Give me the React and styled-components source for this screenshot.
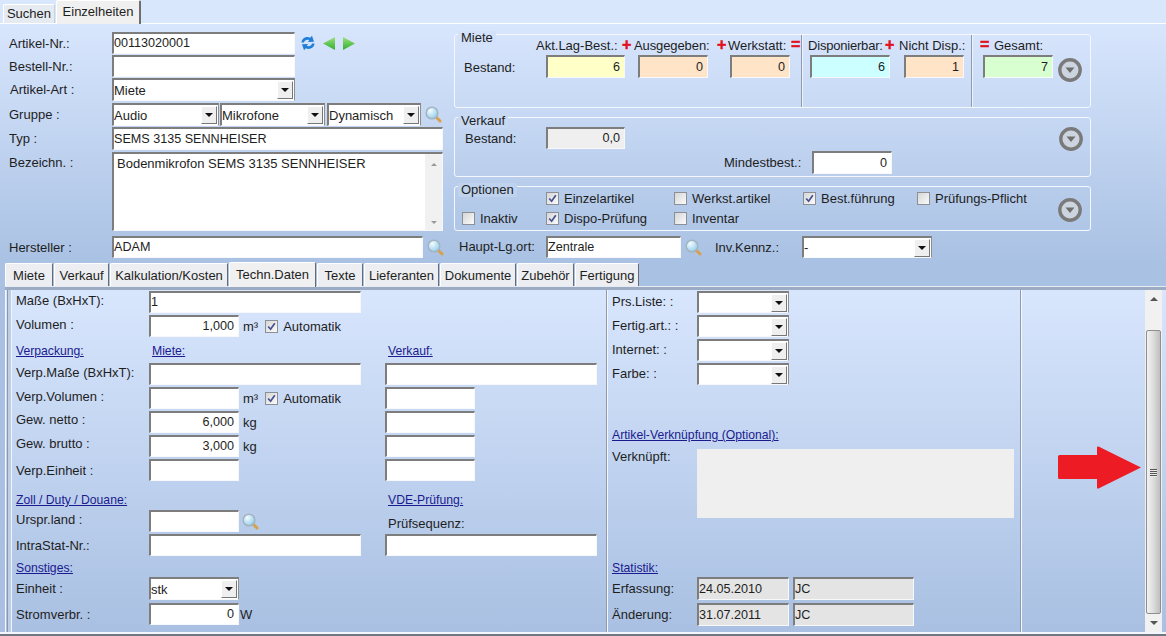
import React from "react";
import styled, { createGlobalStyle } from "styled-components";

const Global = createGlobalStyle`
  html, body { margin: 0; padding: 0; background: #d8e6fc; }
  body { font-family: "Liberation Sans", Arial, sans-serif; font-size: 13px; color: #1e1e1e; }
`;

const Page = styled.div`
  position: relative;
  width: 1166px;
  height: 636px;
  overflow: hidden;
  display: flex;
  flex-direction: column;
`;

/* top tabs */
const TopBar = styled.div`
  height: 23px;
  flex: none;
  display: flex;
  align-items: flex-end;
  padding-left: 3px;
  background: #d9e7fc;
  border-bottom: 1px solid #fdfeff;
  box-sizing: content-box;
`;
const TopTab = styled.div`
  box-sizing: border-box;
  display: flex;
  justify-content: center;
  align-items: center;
  width: ${(p) => p.$w}px;
  height: ${(p) => (p.$active ? 24 : 19)}px;
  margin-bottom: ${(p) => (p.$active ? -1 : 0)}px;
  margin-left: ${(p) => (p.$active ? 1 : 0)}px;
  padding-bottom: ${(p) => (p.$active ? 3 : 1)}px;
  background: ${(p) => (p.$active ? "#f0f0f0" : "#e6ebf2")};
  border-top: 1px solid #fff;
  border-left: 1px solid #fff;
  border-right: ${(p) => (p.$active ? "2px solid #6e6e6e" : "1px solid #c8d0dc")};
  border-radius: 2px 2px 0 0;
`;

/* header */
const Header = styled.div`
  height: 239px;
  flex: none;
  display: flex;
  background: linear-gradient(#d8e6fd, #a9c1e3);
`;
const LeftHead = styled.div`
  width: 454px;
  flex: none;
  box-sizing: border-box;
  padding: 8px 0 0 9px;
`;
const Row = styled.div`
  display: flex;
  align-items: center;
  height: ${(p) => p.$h || 22}px;
  margin-top: ${(p) => p.$mt ?? 1}px;
`;
const Label = styled.div`
  width: ${(p) => p.$w}px;
  flex: none;
  white-space: nowrap;
  padding-left: ${(p) => p.$pl || 0}px;
  padding-bottom: ${(p) => p.$lift || 0}px;
  padding-top: ${(p) => p.$drop || 0}px;
  align-self: ${(p) => (p.$top ? "flex-start" : "center")};
  box-sizing: border-box;
`;
const Field = styled.div`
  box-sizing: border-box;
  flex: none;
  width: ${(p) => p.$w}px;
  height: ${(p) => p.$h || 22}px;
  margin-left: ${(p) => p.$ml || 0}px;
  padding: ${(p) => (p.$right ? "0 4px 1px 0" : "0 2px 1px 0")};
  font-size: 12.6px;
  background: ${(p) => p.$bg || "#fff"};
  border-style: solid;
  border-width: 2px 1px 1px 2px;
  border-color: #7d7d7d #f6f8fb #f6f8fb #7d7d7d;
  display: flex;
  align-items: center;
  justify-content: ${(p) => (p.$right ? "flex-end" : "flex-start")};
  white-space: nowrap;
  overflow: hidden;
`;
const SelectBox = styled(Field)`
  justify-content: space-between;
  padding: 0 1px 0 0;
  font-size: 13px;
  border-color: #7d7d7d #8d8d8d #f6f8fb #7d7d7d;
`;
const Drop = styled.span`
  box-sizing: border-box;
  flex: none;
  width: 16px;
  height: 18px;
  background: #efefef;
  border: 1px solid;
  border-color: #fff #777 #777 #fff;
  display: flex;
  align-items: center;
  justify-content: center;
  &::after {
    content: "";
    border-left: 4px solid transparent;
    border-right: 4px solid transparent;
    border-top: 4px solid #111;
  }
`;
const Memo = styled(Field)`
  align-items: flex-start;
  justify-content: space-between;
  padding: 2px 0 0 3px;
  font-size: 13px;
`;
const MemoBar = styled.span`
  flex: none;
  width: 17px;
  margin-top: -2px;
  height: 77px;
  background: #f1f1f1;
  display: flex;
  flex-direction: column;
  align-items: center;
  justify-content: space-between;
  padding: 9px 0 7px;
  box-sizing: border-box;
`;
const Tip = styled.i`
  width: 0;
  height: 0;
  border-left: 3px solid transparent;
  border-right: 3px solid transparent;
  ${(p) => (p.$down ? "border-top: 3px solid #999;" : "border-bottom: 3px solid #999;")}
`;
const IconWrap = styled.span`
  display: inline-flex;
  flex: none;
  margin-left: ${(p) => p.$ml || 0}px;
`;

const RightHead = styled.div`
  width: 637px;
  flex: none;
  padding-top: 10px;
`;
const Group = styled.div`
  position: relative;
  box-sizing: border-box;
  height: ${(p) => p.$h}px;
  margin-bottom: ${(p) => p.$mb || 0}px;
  border: 1px solid #f4f8fe;
  border-radius: 3px;
  display: ${(p) => (p.$flex ? "flex" : "block")};
`;
const Legend = styled.span`
  position: absolute;
  left: 3px;
  top: -4px;
  padding: 0 3px;
  line-height: 14px;
  background: ${(p) => p.$bg};
`;
const Section = styled.div`
  width: ${(p) => p.$w}px;
  flex: none;
  box-sizing: border-box;
  border-left: ${(p) => (p.$sep ? "1px solid #8f9aac" : "none")};
  box-shadow: ${(p) => (p.$sep ? "inset 1px 0 0 #eef3fb" : "none")};
`;
const HeadRow = styled.div`
  display: flex;
  align-items: center;
  height: 20px;
  padding-left: ${(p) => p.$pl || 0}px;
  white-space: nowrap;
`;
const HeadCell = styled.span`
  width: ${(p) => p.$w}px;
  flex: none;
  letter-spacing: ${(p) => p.$ls || 0}px;
`;
const Sign = styled.span`
  width: ${(p) => p.$w}px;
  flex: none;
  color: #e3101f;
  font-weight: 700;
  font-size: 16px;
  line-height: 14px;
  -webkit-text-stroke: 0.5px #e3101f;
`;
const StockRow = styled.div`
  display: flex;
  align-items: flex-start;
`;
const StockLabel = styled.div`
  width: 91px;
  padding-left: 9px;
  padding-top: 5px;
  box-sizing: border-box;
  flex: none;
`;
const RoundBtn = styled.span`
  display: inline-flex;
  flex: none;
  margin-left: ${(p) => p.$ml || 0}px;
  margin-right: ${(p) => p.$mr || 0}px;
  margin-top: ${(p) => p.$mt || 0}px;
`;
const OptGrid = styled.div`
  display: grid;
  grid-template-columns: 84px 128px 129px 114px 141px 24px;
  grid-template-rows: 20px 20px;
  padding: 1px 0 0 7px;
`;
const Check = styled.label`
  display: flex;
  align-items: center;
  gap: 5px;
  white-space: nowrap;
  grid-column: ${(p) => p.$col};
  grid-row: ${(p) => p.$row};
`;
const AutoCheck = styled(Check)`
  flex: none;
  margin-left: 7px;
`;
const Aside = styled.div`
  flex: none;
  width: ${(p) => p.$w}px;
  display: flex;
  align-items: center;
`;
const Box = styled.span`
  box-sizing: border-box;
  width: 13px;
  height: 13px;
  flex: none;
  border: 1px solid #8b8f96;
  background: linear-gradient(135deg, #d6d6d6, #fbfbfb);
  display: flex;
  align-items: center;
  justify-content: center;
`;
const OptBtn = styled.span`
  grid-column: 6;
  grid-row: 1 / span 2;
  align-self: center;
  display: inline-flex;
  margin-top: 3px;
`;

/* second tabs */
const TabStrip = styled.div`
  height: 23px;
  flex: none;
  display: flex;
  align-items: flex-end;
  padding-left: 5px;
  background: #a9c1e3;
  position: relative;
`;
const SubTab = styled.div`
  box-sizing: border-box;
  width: ${(p) => p.$w}px;
  height: ${(p) => (p.$active ? 25 : 23)}px;
  margin-left: ${(p) => p.$ml ?? 1}px;
  margin-bottom: ${(p) => (p.$active ? -1 : 0)}px;
  padding-bottom: ${(p) => (p.$active ? 2 : 0)}px;
  background: ${(p) => (p.$active ? "#f0f0f0" : "#eceef1")};
  border-top: 1px solid #fff;
  border-left: 1px solid #fff;
  border-right: 1px solid #666c75;
  border-radius: 2px 2px 0 0;
  display: flex;
  align-items: center;
  justify-content: center;
  white-space: nowrap;
  z-index: ${(p) => (p.$active ? 2 : 1)};
`;

/* tab panel */
const Panel = styled.div`
  flex: 1;
  min-height: 0;
  display: flex;
  flex-direction: column;
  background: #a9c0e2;
`;
const PanelTop = styled.div`
  height: 4px;
  flex: none;
  background: linear-gradient(#e6ebf2 0 25%, #9aabc3 25% 100%);
  margin-left: 5px;
`;
const PanelBody = styled.div`
  flex: 1;
  min-height: 0;
  display: flex;
  margin-left: 5px;
  border-left: 1px solid #f3f6fb;
  background: linear-gradient(#d8e6fd, #a9c0e2);
`;
const PanelEdge = styled.div`
  width: 5px;
  flex: none;
  margin-left: 1px;
  border-left: 1px solid #8c98aa;
  border-right: 1px solid #f1f5fb;
  background: #bdcde3;
  box-sizing: border-box;
`;
const PanelBottom = styled.div`
  height: 4px;
  flex: none;
  background: linear-gradient(#f3f6fb 0 50%, #6f7782 50% 100%);
`;
const Col = styled.div`
  box-sizing: border-box;
  flex: none;
  width: ${(p) => p.$w}px;
  padding-left: 4px;
  padding-top: 1px;
`;
const Divider = styled.div`
  flex: none;
  width: 2px;
  background: linear-gradient(90deg, #8f9aac 50%, #f3f6fb 50%);
`;
const Link = styled.div`
  color: #1b1b8f;
  text-decoration: underline;
  white-space: nowrap;
  font-size: 12.2px;
  flex: none;
  width: ${(p) => (p.$w ? `${p.$w}px` : "auto")};
`;
const Unit = styled.span`
  margin-left: ${(p) => p.$ml || 4}px;
  flex: none;
  white-space: nowrap;
`;
const ReadBox = styled.div`
  box-sizing: border-box;
  width: 317px;
  height: 69px;
  background: #efefef;
  flex: none;
`;
const Spacer = styled.div`
  flex: 1;
`;
const Scrollbar = styled.div`
  flex: none;
  width: 17px;
  margin-right: 4px;
  background: #f1f1f1;
  display: flex;
  flex-direction: column;
  align-items: center;
`;
const ScrollEnd = styled.div`
  flex: none;
  box-sizing: border-box;
  height: ${(p) => p.$h}px;
  padding-top: ${(p) => p.$pt}px;
  display: flex;
  justify-content: center;
`;
const ArrowTip = styled.i`
  width: 0;
  height: 0;
  border-left: 4px solid transparent;
  border-right: 4px solid transparent;
  ${(p) => (p.$down ? "border-top: 4px solid #555;" : "border-bottom: 4px solid #555;")}
`;
const Thumb = styled.div`
  flex: 1;
  box-sizing: border-box;
  width: 15px;
  border: 1px solid #8e8e8e;
  border-radius: 2px;
  background: linear-gradient(90deg, #f2f2f2, #dcdcdc 50%, #bfbfbf);
  display: flex;
  align-items: center;
  justify-content: center;
`;
const Grip = styled.span`
  display: block;
  width: 7px;
  height: 8px;
  margin-top: 2px;
  background: repeating-linear-gradient(#555 0 1px, #e8e8e8 1px 2px);
`;
const RedArrow = styled.svg`
  position: absolute;
  left: 1058px;
  top: 446px;
`;

/* icons */
const Lens = () => (
  <svg width="17" height="17" viewBox="0 0 17 17">
    <defs>
      <radialGradient id="gl" cx="35%" cy="30%" r="80%">
        <stop offset="0" stopColor="#f4fbff" />
        <stop offset="1" stopColor="#8ccae9" />
      </radialGradient>
    </defs>
    <path d="M11 11L15 15" stroke="#d8a04a" strokeWidth="3" strokeLinecap="round" />
    <circle cx="7" cy="7" r="5.8" fill="url(#gl)" stroke="#a3b4c0" strokeWidth="1.5" />
  </svg>
);
const Refresh = () => (
  <svg width="16" height="16" viewBox="0 0 16 16">
    <path d="M1.5 7.5C1.8 3.2 6.5 0.8 10.2 2.8L12 0.8L14 6.8L7.8 7L9.3 5.2C7 4.1 4.6 5.2 4 7.5Z" fill="#1f7fd8" />
    <path d="M14.5 8.5C14.2 12.8 9.5 15.2 5.8 13.2L4 15.2L2 9.2L8.2 9L6.7 10.8C9 11.9 11.4 10.8 12 8.5Z" fill="#1f7fd8" />
  </svg>
);
const GreenArrow = ({ left }) => (
  <svg width="12" height="13" viewBox="0 0 12 13">
    <defs>
      <linearGradient id={left ? "gal" : "gar"} x1="0" y1="0" x2="0" y2="1">
        <stop offset="0" stopColor="#9be07f" />
        <stop offset="1" stopColor="#2fae2c" />
      </linearGradient>
    </defs>
    <polygon points={left ? "12,0 12,13 0,6.5" : "0,0 0,13 12,6.5"} fill={`url(#${left ? "gal" : "gar"})`} />
  </svg>
);
const Round = () => (
  <svg width="24" height="24" viewBox="0 0 24 24">
    <circle cx="12" cy="12" r="10.2" fill="#ccd4df" stroke="#7a7a7a" strokeWidth="3.4" />
    <polygon points="7.5,9.5 16.5,9.5 12,15" fill="#6f6f6f" />
  </svg>
);
const Tick = () => (
  <svg width="9" height="9" viewBox="0 0 9 9">
    <path d="M1.2 4.5L3.6 7.2L7.8 1.2" fill="none" stroke="#46508f" strokeWidth="1.7" />
  </svg>
);

const Sel = ({ w, h, children, ml }) => (
  <SelectBox $w={w} $h={h} $ml={ml}>
    <span>{children}</span>
    <Drop />
  </SelectBox>
);
const Opt = ({ col, row, on, children }) => (
  <Check $col={col} $row={row}>
    <Box>{on && <Tick />}</Box>
    {children}
  </Check>
);

export default function App() {
  return (
    <Page>
      <Global />
      <TopBar>
        <TopTab $w={52}>Suchen</TopTab>
        <TopTab $w={85} $active>Einzelheiten</TopTab>
      </TopBar>

      <Header>
        <LeftHead>
          <Row $mt={0}>
            <Label $w={103}>Artikel-Nr.:</Label>
            <Field $w={183}>00113020001</Field>
            <IconWrap $ml={5}><Refresh /></IconWrap>
            <IconWrap $ml={7}><GreenArrow left /></IconWrap>
            <IconWrap $ml={8}><GreenArrow /></IconWrap>
          </Row>
          <Row>
            <Label $w={103}>Bestell-Nr.:</Label>
            <Field $w={183} />
          </Row>
          <Row $h={23}>
            <Label $w={103} $pl={1}>Artikel-Art :</Label>
            <Sel w={183} h={23}>Miete</Sel>
          </Row>
          <Row $h={23} $mt={2}>
            <Label $w={103}>Gruppe :</Label>
            <Sel w={107} h={23}>Audio</Sel>
            <Sel w={105} h={23} ml={1}>Mikrofone</Sel>
            <Sel w={94} h={23} ml={2}>Dynamisch</Sel>
            <IconWrap $ml={4}><Lens /></IconWrap>
          </Row>
          <Row $h={23}>
            <Label $w={103}>Typ :</Label>
            <Field $w={331} $h={23}>SEMS 3135 SENNHEISER</Field>
          </Row>
          <Row $h={79} $mt={2}>
            <Label $w={103} $top $drop={3}>Bezeichn. :</Label>
            <Memo $w={331} $h={79}>
              <span>Bodenmikrofon SEMS 3135 SENNHEISER</span>
              <MemoBar><Tip /><Tip $down /></MemoBar>
            </Memo>
          </Row>
          <Row $mt={5}>
            <Label $w={103}>Hersteller :</Label>
            <Field $w={311}>ADAM</Field>
            <IconWrap $ml={4}><Lens /></IconWrap>
          </Row>
        </LeftHead>

        <RightHead>
          <Group $h={74} $mb={9} $flex>
            <Legend $bg="#d3e2fa">Miete</Legend>
            <Section $w={346}>
              <HeadRow $pl={81}>
                <HeadCell $w={86}>Akt.Lag-Best.:</HeadCell>
                <Sign $w={12}>+</Sign>
                <HeadCell $w={83} $ls={-0.1}>Ausgegeben:</HeadCell>
                <Sign $w={11}>+</Sign>
                <HeadCell $w={63}>Werkstatt:</HeadCell>
                <Sign $w={9}>=</Sign>
              </HeadRow>
              <StockRow>
                <StockLabel>Bestand:</StockLabel>
                <Field $w={79} $h={23} $bg="#ffffc8" $right>6</Field>
                <Field $w={70} $h={23} $ml={13} $bg="#ffe4c8" $right>0</Field>
                <Field $w={60} $h={23} $ml={22} $bg="#ffe4c8" $right>0</Field>
              </StockRow>
            </Section>
            <Section $w={170} $sep>
              <HeadRow $pl={6}>
                <HeadCell $w={77} $ls={-0.2}>Disponierbar:</HeadCell>
                <Sign $w={14}>+</Sign>
                <HeadCell $w={68}>Nicht Disp.:</HeadCell>
              </HeadRow>
              <StockRow>
                <Field $w={80} $h={23} $ml={8} $bg="#ccffff" $right>6</Field>
                <Field $w={60} $h={23} $ml={14} $bg="#ffe4c8" $right>1</Field>
              </StockRow>
            </Section>
            <Section $w={119} $sep>
              <HeadRow $pl={8}>
                <Sign $w={14}>=</Sign>
                <HeadCell $w={60}>Gesamt:</HeadCell>
              </HeadRow>
              <StockRow>
                <Field $w={70} $h={23} $ml={11} $bg="#d8ffd0" $right>7</Field>
                <RoundBtn $ml={5} $mt={3}><Round /></RoundBtn>
              </StockRow>
            </Section>
          </Group>

          <Group $h={60} $mb={9}>
            <Legend $bg="#c7d9f3">Verkauf</Legend>
            <Row $mt={9}>
              <Label $w={91} $pl={10}>Bestand:</Label>
              <Field $w={79} $bg="#efefef" $right>0,0</Field>
              <Spacer />
              <RoundBtn $mt={1} $mr={7}><Round /></RoundBtn>
            </Row>
            <Row $h={23} $mt={2}>
              <Label $w={357} $pl={269}>Mindestbest.:</Label>
              <Field $w={80} $h={23} $right>0</Field>
            </Row>
          </Group>

          <Group $h={45}>
            <Legend $bg="#bfd2ee">Optionen</Legend>
            <OptGrid>
              <Opt col={2} row={1} on>Einzelartikel</Opt>
              <Opt col={3} row={1}>Werkst.artikel</Opt>
              <Opt col={4} row={1} on>Best.führung</Opt>
              <Opt col={5} row={1}>Prüfungs-Pflicht</Opt>
              <Opt col={1} row={2}>Inaktiv</Opt>
              <Opt col={2} row={2} on>Dispo-Prüfung</Opt>
              <Opt col={3} row={2}>Inventar</Opt>
              <OptBtn><Round /></OptBtn>
            </OptGrid>
          </Group>

          <Row $mt={5}>
            <Label $w={92} $pl={5} $lift={2}>Haupt-Lg.ort:</Label>
            <Field $w={135}>Zentrale</Field>
            <IconWrap $ml={4}><Lens /></IconWrap>
            <Label $w={100} $pl={13}>Inv.Kennz.:</Label>
            <Sel w={130}>-</Sel>
          </Row>
        </RightHead>
      </Header>

      <TabStrip>
        <SubTab $w={48} $ml={0}>Miete</SubTab>
        <SubTab $w={55}>Verkauf</SubTab>
        <SubTab $w={118}>Kalkulation/Kosten</SubTab>
        <SubTab $w={87} $active>Techn.Daten</SubTab>
        <SubTab $w={46}>Texte</SubTab>
        <SubTab $w={75}>Lieferanten</SubTab>
        <SubTab $w={76}>Dokumente</SubTab>
        <SubTab $w={57}>Zubehör</SubTab>
        <SubTab $w={64}>Fertigung</SubTab>
      </TabStrip>

      <Panel>
        <PanelTop />
        <PanelBody>
          <PanelEdge />
          <Col $w={594}>
            <Row $mt={0}>
              <Label $w={133} $lift={4}>Maße (BxHxT):</Label>
              <Field $w={212}>1</Field>
            </Row>
            <Row $mt={2}>
              <Label $w={133} $lift={3}>Volumen :</Label>
              <Field $w={90} $right>1,000</Field>
              <Aside $w={146}>
                <Unit>m³</Unit>
                <AutoCheck as="span"><Box><Tick /></Box>Automatik</AutoCheck>
              </Aside>
            </Row>
            <Row $h={14} $mt={7}>
              <Link $w={136}>Verpackung:</Link>
              <Link $w={236}>Miete:</Link>
              <Link>Verkauf:</Link>
            </Row>
            <Row $mt={5}>
              <Label $w={133} $lift={4}>Verp.Maße (BxHxT):</Label>
              <Field $w={212} />
              <Field $w={212} $ml={24} />
            </Row>
            <Row $mt={2}>
              <Label $w={133} $lift={4}>Verp.Volumen :</Label>
              <Field $w={90} />
              <Aside $w={146}>
                <Unit>m³</Unit>
                <AutoCheck as="span"><Box><Tick /></Box>Automatik</AutoCheck>
              </Aside>
              <Field $w={90} />
            </Row>
            <Row $mt={2}>
              <Label $w={133} $lift={6}>Gew. netto :</Label>
              <Field $w={90} $right>6,000</Field>
              <Aside $w={146}><Unit>kg</Unit></Aside>
              <Field $w={90} />
            </Row>
            <Row $mt={2}>
              <Label $w={133} $lift={6}>Gew. brutto :</Label>
              <Field $w={90} $right>3,000</Field>
              <Aside $w={146}><Unit>kg</Unit></Aside>
              <Field $w={90} />
            </Row>
            <Row $mt={2}>
              <Label $w={133}>Verp.Einheit :</Label>
              <Field $w={90} />
              <Field $w={90} $ml={146} />
            </Row>
            <Row $h={14} $mt={12}>
              <Link $w={372}>Zoll / Duty / Douane:</Link>
              <Link>VDE-Prüfung:</Link>
            </Row>
            <Row $mt={3}>
              <Label $w={133} $lift={4}>Urspr.land :</Label>
              <Field $w={90} />
              <Aside $w={149}>
                <IconWrap $ml={3}><Lens /></IconWrap>
              </Aside>
              <Label $w={90} $drop={4}>Prüfsequenz:</Label>
            </Row>
            <Row $mt={2}>
              <Label $w={133}>IntraStat-Nr.:</Label>
              <Field $w={212} />
              <Field $w={212} $ml={24} />
            </Row>
            <Row $h={14} $mt={5}>
              <Link>Sonstiges:</Link>
            </Row>
            <Row $h={23} $mt={2}>
              <Label $w={133}>Einheit :</Label>
              <Sel w={90} h={23}>stk</Sel>
            </Row>
            <Row $mt={3}>
              <Label $w={133}>Stromverbr. :</Label>
              <Field $w={90} $right>0</Field>
              <Unit $ml={1}>W</Unit>
            </Row>
          </Col>
          <Divider />
          <Col $w={412}>
            <Row $mt={0}>
              <Label $w={85} $lift={2}>Prs.Liste: :</Label>
              <Sel w={92}></Sel>
            </Row>
            <Row $mt={2}>
              <Label $w={85} $lift={2}>Fertig.art.: :</Label>
              <Sel w={92}></Sel>
            </Row>
            <Row $mt={2}>
              <Label $w={85} $lift={2}>Internet: :</Label>
              <Sel w={92}></Sel>
            </Row>
            <Row $mt={2}>
              <Label $w={85} $lift={2}>Farbe: :</Label>
              <Sel w={92}></Sel>
            </Row>
            <Row $h={14} $mt={43}>
              <Link>Artikel-Verknüpfung (Optional):</Link>
            </Row>
            <Row $h={69} $mt={7}>
              <Label $w={85} $top>Verknüpft:</Label>
              <ReadBox />
            </Row>
            <Row $h={14} $mt={43}>
              <Link>Statistik:</Link>
            </Row>
            <Row $h={23} $mt={2}>
              <Label $w={85}>Erfassung:</Label>
              <Field $w={92} $h={23} $bg="#e4e4e4">24.05.2010</Field>
              <Field $w={121} $h={23} $ml={4} $bg="#e4e4e4">JC</Field>
            </Row>
            <Row $h={23} $mt={3}>
              <Label $w={85}>Änderung:</Label>
              <Field $w={92} $h={23} $bg="#e4e4e4">31.07.2011</Field>
              <Field $w={121} $h={23} $ml={4} $bg="#e4e4e4">JC</Field>
            </Row>
          </Col>
          <Divider />
          <Spacer />
          <Scrollbar>
            <ScrollEnd $h={40} $pt={7}><ArrowTip /></ScrollEnd>
            <Thumb><Grip /></Thumb>
            <ScrollEnd $h={18} $pt={7}><ArrowTip $down /></ScrollEnd>
          </Scrollbar>
        </PanelBody>
        <PanelBottom />
      </Panel>

      <RedArrow width="83" height="43" viewBox="0 0 83 43">
        <path d="M1.5 9H39V1.5Q39 0 40.5 0.5L83 21.5L40.5 42.5Q39 43 39 41.5V33H1.5Q0 33 0 31.5V10.5Q0 9 1.5 9Z" fill="#ed1c24" />
      </RedArrow>
    </Page>
  );
}
